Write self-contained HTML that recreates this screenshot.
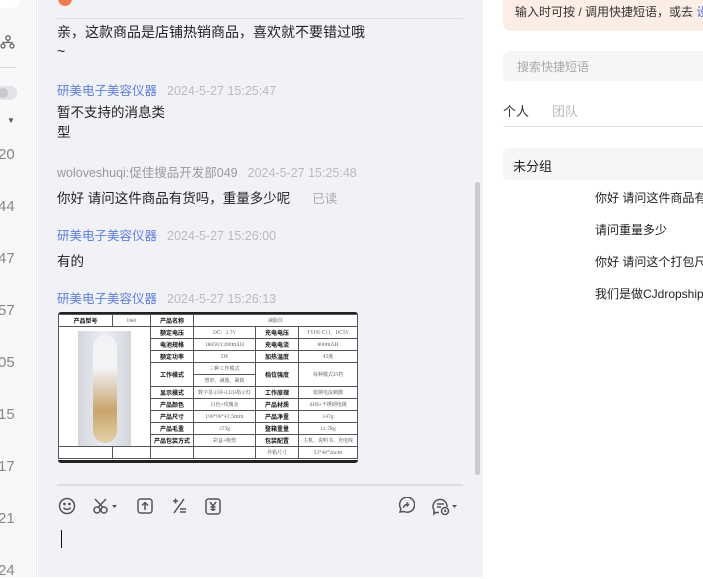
<!DOCTYPE html><html><head><meta charset="utf-8"><style>
*{margin:0;padding:0;box-sizing:border-box}
body{width:703px;height:577px;overflow:hidden;position:relative;background:#fff;font-family:"Liberation Sans","Noto Sans CJK SC",sans-serif;font-size:13px;color:#222}
.a{position:absolute}
.left{left:0;top:0;width:37px;height:577px;background:#f7f8fa;border-right:1px solid #e8e9ec}
.num{position:absolute;left:-2px;color:#888;font-size:15px}
.chat{left:38px;top:0;width:445px;height:577px;background:#f1f2f6}
.nm{color:#5b7ee8;font-size:12.5px}
.tm{color:#bbb;font-size:12.5px;margin-left:10px}
.gr{color:#999;font-size:12.5px}
.msg{font-size:13.5px;color:#222;white-space:nowrap}
table{border-collapse:collapse;font-size:5px;font-family:"Noto Serif CJK SC",serif;table-layout:fixed}
td{border:1px solid #555;text-align:center;height:12px;padding:0;color:#444;white-space:nowrap;overflow:hidden}
td.b{font-weight:bold;font-family:"Noto Sans CJK SC",sans-serif;color:#111;font-size:6px}
.ic{position:absolute;top:497px;stroke:#555;fill:none;stroke-width:1.5}
</style></head><body>
<div class="a left">
<div class="a" style="left:0;top:0;width:20px;height:8px;background:#fff;border-radius:0 0 8px 0"></div>
<svg class="a" style="left:0;top:34px" width="16" height="16" viewBox="0 0 16 16" fill="none" stroke="#666" stroke-width="1.3"><circle cx="8" cy="4" r="2.2"/><circle cx="3" cy="12" r="2"/><circle cx="12" cy="12" r="2"/><path d="M8 6v2M3 10V8.5h9V10"/></svg>
<div class="a" style="left:0;top:67px;width:17px;height:1px;background:#ddd"></div>
<div class="a" style="left:-4px;top:86px;width:21px;height:14px;border-radius:7px;background:#e2e3e6"><div style="width:10px;height:10px;margin:2px;border-radius:5px;background:#c8c9cc"></div></div>
<div class="a" style="left:7px;top:116px;font-size:8px;color:#555">▼</div>
<div class="num" style="top:146px">20</div>
<div class="num" style="top:198px">44</div>
<div class="num" style="top:250px">47</div>
<div class="num" style="top:302px">57</div>
<div class="num" style="top:354px">05</div>
<div class="num" style="top:406px">15</div>
<div class="num" style="top:458px">17</div>
<div class="num" style="top:510px">21</div>
<div class="num" style="top:562px">24</div>
</div>
<div class="a chat">
<div class="a" style="left:20px;top:-8px;width:14px;height:14px;border-radius:7px;background:#f47a52"></div>
<div class="a" style="left:19px;top:18px;width:406px;height:1px;background:#dcdde0"></div>
<div class="a msg" style="left:19px;top:23px;line-height:19px;font-size:14px">亲，这款商品是店铺热销商品，喜欢就不要错过哦<br>~</div>
<div class="a" style="left:19px;top:80px"><span class="nm">研美电子美容仪器</span><span class="tm">2024-5-27 15:25:47</span></div>
<div class="a msg" style="left:19px;top:103px;line-height:20px">暂不支持的消息类<br>型</div>
<div class="a" style="left:19px;top:162px"><span class="gr">woloveshuqi:促佳搜品开发部049</span><span class="tm">2024-5-27 15:25:48</span></div>
<div class="a msg" style="left:19px;top:187px">你好 请问这件商品有货吗，重量多少呢<span style="color:#aaa;font-size:12.5px;margin-left:22px">已读</span></div>
<div class="a" style="left:19px;top:225px"><span class="nm">研美电子美容仪器</span><span class="tm">2024-5-27 15:26:00</span></div>
<div class="a msg" style="left:19px;top:250px">有的</div>
<div class="a" style="left:19px;top:288px"><span class="nm">研美电子美容仪器</span><span class="tm">2024-5-27 15:26:13</span></div>
<div class="a" style="left:20px;top:312px;width:300px;height:151px;background:#fff;border-bottom:3px solid #222;border-top:2px solid #222;border-radius:3px;overflow:hidden">
<table style="width:300px">
<colgroup><col style="width:54px"><col style="width:38px"><col style="width:43px"><col style="width:62px"><col style="width:43px"><col></colgroup>
<tr><td class="b">产品型号</td><td>D60</td><td class="b">产品名称</td><td colspan="3">减脂仪</td></tr>
<tr><td colspan="2" rowspan="10" style="border-bottom:none;position:relative;vertical-align:top"><div style="position:absolute;left:19px;top:4px;width:53px;height:118px;background:linear-gradient(90deg,#d4d6de,#eceef3,#d4d6de)"><div style="margin:4px auto;width:24px;height:108px;border-radius:12px;background:linear-gradient(#f3f3f6 30%,#c9a46a 70%,#e5d2a8)"></div></div></td><td class="b">额定电压</td><td>DC：3.7V</td><td class="b">充电电压</td><td>TYPE-C口，DC5V</td></tr>
<tr><td class="b">电池规格</td><td>18650/1200mAH</td><td class="b">充电电流</td><td>800mAH</td></tr>
<tr><td class="b">额定功率</td><td>5W</td><td class="b">加热温度</td><td>42度</td></tr>
<tr><td class="b" rowspan="2">工作模式</td><td>三种工作模式</td><td class="b" rowspan="2">档位强度</td><td rowspan="2">每种模式15档</td></tr>
<tr><td>塑形、减脂、紧致</td></tr>
<tr><td class="b">显示模式</td><td>数字显示屏+LED指示灯</td><td class="b">工作原理</td><td>低频电流刺激</td></tr>
<tr><td class="b">产品颜色</td><td>白色+玫瑰金</td><td class="b">产品材质</td><td>ABS+不锈钢电极</td></tr>
<tr><td class="b">产品尺寸</td><td>190*90*43.5mm</td><td class="b">产品净重</td><td>147g</td></tr>
<tr><td class="b">产品毛重</td><td>375g</td><td class="b">整箱重量</td><td>12.7kg</td></tr>
<tr><td class="b">产品包装方式</td><td>彩盒+吸塑</td><td class="b">包装配置</td><td>主机、说明书、充电线</td></tr>
<tr><td></td><td></td><td></td><td></td><td>外箱尺寸</td><td>53*48*26cm</td></tr>
</table></div>
<div class="a" style="left:437px;top:182px;width:5px;height:293px;border-radius:3px;background:#c9cacd"></div>
<div class="a" style="left:19px;top:484px;width:406px;height:2px;background:#dcdde0"></div>
<svg class="ic" style="left:20px" width="18" height="18" viewBox="0 0 18 18"><circle cx="9" cy="9" r="7.5"/><circle cx="6.5" cy="7" r=".6" fill="#555"/><circle cx="11.5" cy="7" r=".6" fill="#555"/><path d="M5.5 10.5c1.5 2.5 5.5 2.5 7 0"/></svg>
<svg class="ic" style="left:54px" width="28" height="18" viewBox="0 0 28 18"><circle cx="5" cy="13" r="3"/><circle cx="12" cy="13" r="3"/><path d="M6 10.5L14 2M11 10.5L3 2"/><path d="M20 8h5l-2.5 3z" fill="#555" stroke="none"/></svg>
<svg class="ic" style="left:98px" width="18" height="18" viewBox="0 0 18 18"><rect x="2" y="2" width="14" height="14" rx="2.5"/><path d="M9 13V6M6 8.5L9 5.5l3 3"/></svg>
<svg class="ic" style="left:132px" width="18" height="18" viewBox="0 0 18 18"><path d="M3 4h5M5.5 1.5v5M14 2L4 16M10 12h6M10 15h6"/></svg>
<svg class="ic" style="left:166px" width="18" height="18" viewBox="0 0 18 18"><rect x="2" y="2" width="14" height="15" rx="2.5"/><path d="M6 5l3 4 3-4M9 9v5M6.5 10h5M6.5 12.5h5"/></svg>
<svg class="ic" style="left:359px" width="18" height="18" viewBox="0 0 18 18"><path d="M3 15l1-3a7.5 7.5 0 1 1 3 2.5z"/><path d="M6.5 11c0-2.5 2-3.5 4.5-3.5M9.5 5.5l2 2-2 2"/></svg>
<svg class="ic" style="left:393px" width="28" height="20" viewBox="0 0 28 20"><path d="M8 15.5H4.5l-1.5 1.5v-4a7 7 0 1 1 13-3"/><path d="M6 7h7M6 10h4"/><circle cx="14" cy="14" r="3.5"/><path d="M14 12.5v1.7h1.3"/><path d="M21 8h5l-2.5 3z" fill="#555" stroke="none"/></svg>
<div class="a" style="left:23px;top:530px;width:1px;height:18px;background:#111"></div>
</div>
<div class="a" style="left:503px;top:-10px;width:220px;height:41px;background:#fdeee5;border-radius:8px"></div>
<div class="a" style="left:515px;top:3px;font-size:12px;color:#333;white-space:nowrap">输入时可按 / 调用快捷短语，或去 <span style="color:#4a6ee0">设置</span></div>
<div class="a" style="left:503px;top:51px;width:220px;height:30px;background:#f5f6f8;border-radius:6px"></div>
<div class="a" style="left:517px;top:58px;font-size:12px;color:#aaa">搜索快捷短语</div>
<div class="a" style="left:503px;top:101px;font-size:13px;color:#333">个人</div>
<div class="a" style="left:552px;top:101px;font-size:13px;color:#bbb">团队</div>
<div class="a" style="left:503px;top:126px;width:200px;height:1px;background:#e2e3e6"></div>
<div class="a" style="left:503px;top:148px;width:220px;height:32px;background:#f5f6f8;border-radius:6px"></div>
<div class="a" style="left:513px;top:156px;font-size:13px;color:#222">未分组</div>
<div class="a" style="left:595px;top:189px;font-size:12px;color:#222;white-space:nowrap">你好 请问这件商品有货</div>
<div class="a" style="left:595px;top:221px;font-size:12px;color:#222">请问重量多少</div>
<div class="a" style="left:595px;top:253px;font-size:12px;color:#222;white-space:nowrap">你好 请问这个打包尺寸</div>
<div class="a" style="left:595px;top:285px;font-size:12px;color:#222;white-space:nowrap">我们是做CJdropshipping</div>
</body></html>
